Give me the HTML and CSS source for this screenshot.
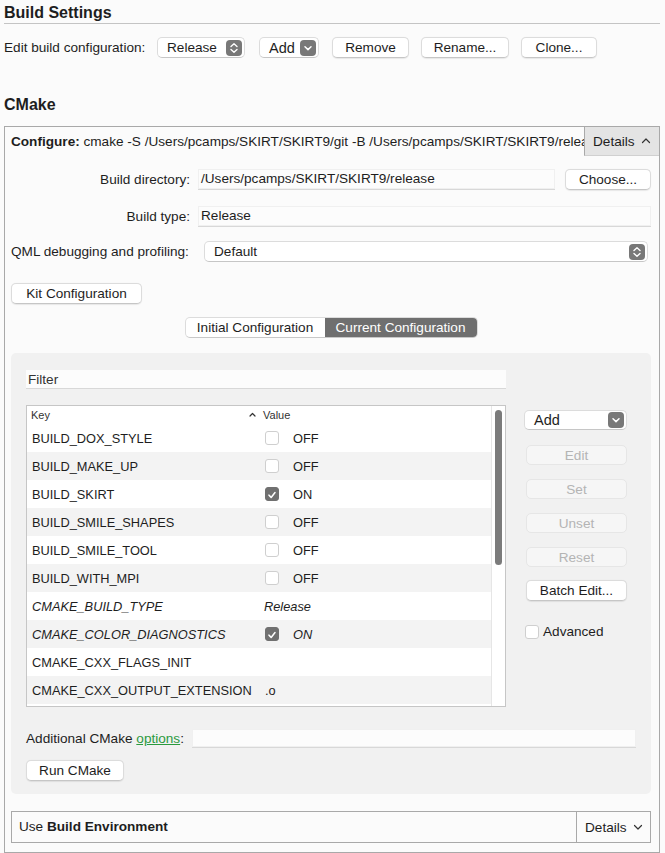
FILE: index.html
```html
<!DOCTYPE html>
<html>
<head>
<meta charset="utf-8">
<link rel="stylesheet" href="styles.css">
</head>
<body>
<div class="page">
  <div class="title">Build Settings</div>
  <div class="config-row">
    <span class="label">Edit build configuration:</span>
    <div class="combo combo-release">
      <span>Release</span>
      <span class="stepper"><svg width="16" height="16" viewBox="0 0 16 16"><path d="M5 6.5 L8 3.8 L11 6.5 M5 9.5 L8 12.2 L11 9.5" fill="none" stroke="#fff" stroke-width="1.4" stroke-linecap="round" stroke-linejoin="round"/></svg></span>
    </div>
    <div class="combo combo-add">
      <span>Add</span>
      <span class="stepper"><svg width="16" height="16" viewBox="0 0 16 16"><path d="M5 6.8 L8 9.6 L11 6.8" fill="none" stroke="#fff" stroke-width="1.5" stroke-linecap="round" stroke-linejoin="round"/></svg></span>
    </div>
    <button class="btn btn-remove">Remove</button>
    <button class="btn btn-rename">Rename...</button>
    <button class="btn btn-clone">Clone...</button>
  </div>

  <div class="title cmake-title">CMake</div>

  <div class="box">
    <div class="box-header">
      <div class="box-summary"><b>Configure:</b> cmake -S /Users/pcamps/SKIRT/SKIRT9/git -B /Users/pcamps/SKIRT/SKIRT9/release</div>
      <div class="details details-open">Details <svg width="10" height="8" viewBox="0 0 10 8"><path d="M1.5 5.5 L5 2 L8.5 5.5" fill="none" stroke="#333" stroke-width="1.2" stroke-linecap="round" stroke-linejoin="round"/></svg></div>
    </div>
    <div class="box-body">
      <div class="form-row">
        <span class="form-label">Build directory:</span>
        <div class="field field-dir">/Users/pcamps/SKIRT/SKIRT9/release</div>
        <button class="btn btn-choose">Choose...</button>
      </div>
      <div class="form-row row-type">
        <span class="form-label">Build type:</span>
        <div class="field field-type">Release</div>
      </div>
      <div class="form-row row-qml">
        <span class="form-label">QML debugging and profiling:</span>
        <div class="combo combo-qml">
          <span>Default</span>
          <span class="stepper"><svg width="16" height="16" viewBox="0 0 16 16"><path d="M5 6.5 L8 3.8 L11 6.5 M5 9.5 L8 12.2 L11 9.5" fill="none" stroke="#fff" stroke-width="1.4" stroke-linecap="round" stroke-linejoin="round"/></svg></span>
        </div>
      </div>
      <button class="btn btn-kit">Kit Configuration</button>
      <div class="segmented">
        <span class="seg">Initial Configuration</span>
        <span class="seg seg-active">Current Configuration</span>
      </div>

      <div class="panel">
        <div class="filter">Filter</div>
        <div class="table-area">
          <div class="table">
            <div class="table-main">
              <div class="thead">
                <span class="col-key">Key</span>
                <span class="sort"><svg width="7" height="5" viewBox="0 0 7 5"><path d="M1 4 L3.5 1.5 L6 4" fill="none" stroke="#333" stroke-width="1.2" stroke-linecap="round" stroke-linejoin="round"/></svg></span>
                <span class="col-val">Value</span>
              </div>
              <div class="tr"><span class="td-key">BUILD_DOX_STYLE</span><span class="td-val"><span class="check"></span>OFF</span></div>
              <div class="tr alt"><span class="td-key">BUILD_MAKE_UP</span><span class="td-val"><span class="check"></span>OFF</span></div>
              <div class="tr"><span class="td-key">BUILD_SKIRT</span><span class="td-val"><span class="check checked"><svg width="14" height="14" viewBox="0 0 14 14"><path d="M3.5 7.2 L6 9.8 L10.5 4.2" fill="none" stroke="#fff" stroke-width="1.8" stroke-linecap="round" stroke-linejoin="round"/></svg></span>ON</span></div>
              <div class="tr alt"><span class="td-key">BUILD_SMILE_SHAPES</span><span class="td-val"><span class="check"></span>OFF</span></div>
              <div class="tr"><span class="td-key">BUILD_SMILE_TOOL</span><span class="td-val"><span class="check"></span>OFF</span></div>
              <div class="tr alt"><span class="td-key">BUILD_WITH_MPI</span><span class="td-val"><span class="check"></span>OFF</span></div>
              <div class="tr italic"><span class="td-key">CMAKE_BUILD_TYPE</span><span class="td-val val-text">Release</span></div>
              <div class="tr alt italic"><span class="td-key">CMAKE_COLOR_DIAGNOSTICS</span><span class="td-val"><span class="check checked"><svg width="14" height="14" viewBox="0 0 14 14"><path d="M3.5 7.2 L6 9.8 L10.5 4.2" fill="none" stroke="#fff" stroke-width="1.8" stroke-linecap="round" stroke-linejoin="round"/></svg></span>ON</span></div>
              <div class="tr"><span class="td-key">CMAKE_CXX_FLAGS_INIT</span><span class="td-val"></span></div>
              <div class="tr alt"><span class="td-key">CMAKE_CXX_OUTPUT_EXTENSION</span><span class="td-val val-ext">.o</span></div>
            </div>
            <div class="scroll-track"><div class="scroll-thumb"></div></div>
          </div>
          <div class="side">
            <div class="combo combo-side">
              <span>Add</span>
              <span class="stepper"><svg width="16" height="16" viewBox="0 0 16 16"><path d="M5 6.8 L8 9.6 L11 6.8" fill="none" stroke="#fff" stroke-width="1.5" stroke-linecap="round" stroke-linejoin="round"/></svg></span>
            </div>
            <button class="btn side-btn disabled">Edit</button>
            <button class="btn side-btn disabled">Set</button>
            <button class="btn side-btn disabled">Unset</button>
            <button class="btn side-btn disabled">Reset</button>
            <button class="btn side-btn batch">Batch Edit...</button>
            <div class="advanced"><span class="check adv-check"></span>Advanced</div>
          </div>
        </div>
        <div class="options-row">
          <span class="options-label">Additional CMake <span class="link">options</span>:</span>
          <div class="field field-options"></div>
        </div>
        <button class="btn btn-run">Run CMake</button>
      </div>

      <div class="env-box">
        <div class="env-text">Use <b>Build Environment</b></div>
        <div class="details details-closed">Details <svg width="10" height="8" viewBox="0 0 10 8"><path d="M1.5 2.5 L5 6 L8.5 2.5" fill="none" stroke="#333" stroke-width="1.2" stroke-linecap="round" stroke-linejoin="round"/></svg></div>
      </div>
    </div>
  </div>
</div>
</body>
</html>
```

FILE: styles.css
```css
* { box-sizing: border-box; }
html, body { margin: 0; padding: 0; background: #fbfbfb; }
body {
  font-family: "Liberation Sans", Arial, sans-serif;
  font-size: 13.6px;
  color: #1e1e1e;
  width: 665px;
  height: 853px;
  overflow: hidden;
}
.page { padding: 3px 5px 0 4px; }

.title {
  font-weight: bold;
  font-size: 16px;
  line-height: 20px;
  height: 21px;
  border-bottom: 1px solid #c4c4c4;
}
.cmake-title { border-bottom: none; margin-top: 37px; height: 20px; }

.config-row {
  display: flex;
  align-items: center;
  margin-top: 13px;
  height: 21px;
}
.label { width: 153px; white-space: nowrap; }

.btn {
  font-family: inherit;
  font-size: 13.6px;
  color: #1e1e1e;
  background: #ffffff;
  border: 1px solid #dcdcdc;
  border-bottom-color: #c6c6c6;
  border-radius: 5px;
  box-shadow: 0 0.5px 1px rgba(0,0,0,0.08);
  height: 21px;
  padding: 0;
  display: flex;
  align-items: center;
  justify-content: center;
}
.combo {
  display: flex;
  align-items: center;
  justify-content: space-between;
  background: #ffffff;
  border: 1px solid #dcdcdc;
  border-bottom-color: #c6c6c6;
  border-radius: 5px;
  height: 21px;
  padding: 0 2px 0 9px;
}
.stepper {
  width: 16px;
  height: 16px;
  border-radius: 4px;
  background: #787878;
  display: flex;
}
.combo-release { width: 88px; }
.combo-add { width: 60px; margin-left: 14px; font-size: 14.5px; }
.btn-remove { width: 77px; margin-left: 13px; }
.btn-rename { width: 88px; margin-left: 12px; }
.btn-clone { width: 76px; margin-left: 12px; }

.box {
  margin-top: 11px;
  width: 656px;
  border: 1px solid #a9a9a9;
  padding-bottom: 9px;
}
.box-header {
  display: flex;
  height: 29px;
}
.box-summary {
  flex: 1;
  padding-left: 6px;
  line-height: 29px;
  white-space: nowrap;
  overflow: hidden;
}
.details {
  display: flex;
  align-items: center;
  gap: 6px;
  padding-left: 8px;
  border-left: 1px solid #a9a9a9;
}
.details-open {
  width: 75px;
  flex: none;
  background: #e4e4e4;
  border-bottom: 1px solid #d0d0d0;
}

.box-body { padding: 0 8px 0 6px; }

.form-row {
  display: flex;
  align-items: center;
  margin-top: 13px;
  height: 21px;
}
.row-type { margin-top: 16px; }
.row-qml { margin-top: 14px; }
.form-label { width: 179px; text-align: right; margin-right: 8px; flex: none; white-space: nowrap; }
.row-qml .form-label { text-align: left; }
.field {
  background: #fcfcfc;
  border-bottom: 1px solid #d8d8d8;
  height: 21px;
  line-height: 20px;
  padding-left: 3px;
  box-shadow: inset 0 0 0 1px #f0f0f0;
}
.field-dir { width: 357px; }
.btn-choose { width: 86px; margin-left: 10px; }
.field-type { width: 453px; }
.combo-qml { width: 444px; margin-left: 6px; padding-left: 9px; }

.btn-kit { width: 131px; margin-top: 21px; }

.segmented {
  display: flex;
  width: 293px;
  height: 21px;
  margin: 13px auto 0;
  border: 1px solid #dcdcdc;
  border-bottom-color: #c8c8c8;
  border-radius: 5px;
  background: #ffffff;
  overflow: hidden;
}
.seg {
  display: flex;
  align-items: center;
  justify-content: center;
  width: 140px;
  white-space: nowrap;
}
.seg-active {
  width: 153px;
  background: #6f6f6f;
  color: #ffffff;
}

.panel {
  margin-top: 15px;
  background: #f1f1f1;
  border-radius: 5px;
  padding: 17px 15px 13px 15px;
}
.filter {
  width: 480px;
  height: 19px;
  line-height: 19px;
  background: #fcfcfc;
  border-bottom: 1px solid #d8d8d8;
  padding-left: 2px;
  color: #333;
}
.table-area {
  display: flex;
  margin-top: 16px;
}
.table {
  display: flex;
  width: 480px;
  height: 302px;
  border: 1px solid #c6c6c6;
  background: #ffffff;
}
.table-main { width: 464px; }
.thead {
  display: flex;
  align-items: center;
  height: 18px;
  font-size: 11px;
  color: #333;
  padding-left: 4px;
}
.col-key { width: 218px; }
.sort { width: 14px; display: flex; align-items: center; padding-bottom: 2px; }
.tr {
  display: flex;
  align-items: center;
  height: 28px;
  font-size: 12.8px;
  background: #ffffff;
}
.tr.alt { background: #f3f3f3; }
.tr.italic { font-style: italic; }
.td-key { width: 236px; padding-left: 5px; white-space: nowrap; }
.td-val { display: flex; align-items: center; }
.val-text { padding-left: 1px; }
.val-ext { padding-left: 2px; }
.check {
  width: 14px;
  height: 14px;
  border: 1px solid #cfcfcf;
  border-radius: 3px;
  background: #ffffff;
  margin-left: 2px;
  margin-right: 14px;
  display: flex;
  flex: none;
}
.check.checked { background: #707070; border-color: #707070; }
.scroll-track {
  width: 14px;
  border-left: 1px solid #e6e6e6;
  padding: 4px 0 0 3px;
}
.scroll-thumb {
  width: 7px;
  height: 155px;
  border-radius: 4px;
  background: #7b7b7b;
}

.side {
  display: flex;
  flex-direction: column;
  margin-left: 18px;
  padding-top: 5px;
  width: 103px;
}
.combo-side { width: 103px; height: 20px; font-size: 14.5px; padding-left: 9px; }
.side-btn { width: 101px; height: 20px; margin-left: 2px; margin-top: 14px; }
.combo-side + .side-btn { margin-top: 15px; }
.side-btn.disabled {
  color: #b4b4b4;
  background: #f6f6f6;
  border-color: #e6e6e6;
  box-shadow: none;
}
.batch { height: 21px; margin-top: 13px; }
.advanced {
  display: flex;
  align-items: center;
  margin-top: 23px;
  margin-left: 1px;
}
.adv-check { margin-left: 0; margin-right: 4px; }

.options-row {
  display: flex;
  align-items: center;
  margin-top: 22px;
  height: 19px;
}
.options-label { width: 166px; white-space: nowrap; flex: none; }
.link { color: #2a9a3e; text-decoration: underline; }
.field-options { width: 444px; height: 19px; }
.btn-run { width: 98px; margin-top: 12px; height: 21px; }

.env-box {
  display: flex;
  margin-top: 17px;
  height: 32px;
  border: 1px solid #a9a9a9;
}
.env-text { flex: 1; padding-left: 7px; line-height: 30px; }
.details-closed { width: 74px; padding-left: 8px; }
```
